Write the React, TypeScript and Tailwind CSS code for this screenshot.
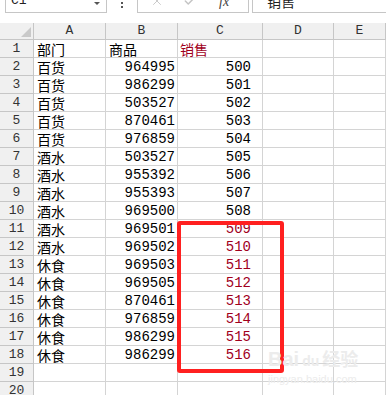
import { X, Check } from "lucide-react";

const rows: [string, string, string][] = [
  ["部门", "商品", "销售"],
  ["百货", "964995", "500"],
  ["百货", "986299", "501"],
  ["百货", "503527", "502"],
  ["百货", "870461", "503"],
  ["百货", "976859", "504"],
  ["酒水", "503527", "505"],
  ["酒水", "955392", "506"],
  ["酒水", "955393", "507"],
  ["酒水", "969500", "508"],
  ["酒水", "969501", "509"],
  ["酒水", "969502", "510"],
  ["休食", "969503", "511"],
  ["休食", "969505", "512"],
  ["休食", "870461", "513"],
  ["休食", "976859", "514"],
  ["休食", "986299", "515"],
  ["休食", "986299", "516"],
  ["", "", ""],
  ["", "", ""],
];

const cjk = "font-['Noto_Sans_CJK_SC',sans-serif]";
const mono = "font-['Liberation_Mono',monospace]";
const cell = "h-[18px] border-r border-b border-[#d4d4d4] bg-white";

export default function App() {
  return (
    <div className="relative h-[395px] w-[386px] overflow-hidden bg-white">
      {/* formula bar, cut off at the top */}
      <div className="-mt-[11px] flex h-[24px] items-stretch">
        <div className="ml-[5px] flex w-[102px] items-center justify-between border border-[#c6c6c6] pr-[6px] pl-[5px]">
          <span className={`${mono} text-[13px] text-[#222]`}>C1</span>
          <span className="mt-[4px] h-0 w-0 border-x-[3px] border-t-[3px] border-x-transparent border-t-[#555]" />
        </div>
        <div className="flex w-[30px] flex-col items-center justify-end gap-[2px] pb-[5px]">
          <span className="h-[2px] w-[2px] bg-[#555]" />
          <span className="h-[2px] w-[2px] bg-[#555]" />
        </div>
        <div className="flex w-[112px] items-center border border-[#c6c6c6] pl-[12px]">
          <X className="h-[14px] w-[14px] text-[#c4c4c4]" strokeWidth={1.5} />
          <Check className="ml-[19px] h-[14px] w-[14px] text-[#c4c4c4]" strokeWidth={2.5} />
          <span className="ml-[22px] font-['Liberation_Serif',serif] text-[14px] text-[#444] italic">
            fx
          </span>
        </div>
        <div className="ml-[3px] flex flex-1 items-center border-y border-l border-[#c6c6c6] pl-[14px]">
          <span className={`${cjk} text-[14px] text-[#222]`}>销售</span>
        </div>
      </div>

      {/* sheet grid */}
      <div className="mt-[10px] grid grid-cols-[34px_72px_72px_85px_71px_1fr]">
        <div className="relative h-[17px] border-r border-b border-[#c6c6c6] bg-[#f0f0f0]">
          <svg className="absolute top-[4px] left-[21px]" width="10" height="10" viewBox="0 0 10 10">
            <polygon points="10,0 10,10 0,10" fill="#c9c9c9" />
          </svg>
        </div>
        {["A", "B", "C", "D", "E"].map((l) => (
          <div
            key={l}
            className={`${mono} flex h-[17px] items-center justify-center border-r border-b border-[#c6c6c6] bg-[#f0f0f0] text-[13px] text-[#333]`}
          >
            {l}
          </div>
        ))}

        {rows.map(([a, b, c], i) => (
          <div key={i} className="contents">
            <div
              className={`${mono} flex h-[18px] items-center justify-center border-r border-b border-[#c6c6c6] bg-[#f0f0f0] text-[13px] text-[#333]`}
            >
              {i + 1}
            </div>
            <div className={`${cell} ${cjk} flex items-center pl-[3px] text-[14px] leading-none text-black`}>{a}</div>
            <div
              className={`${cell} flex items-center pr-[2px] text-[14px] leading-none text-black ${
                i === 0 ? `${cjk} justify-start pl-[3px]` : `${mono} justify-end text-[13px]`
              }`}
            >
              {b}
            </div>
            <div
              className={`${cell} flex items-center text-[14px] leading-none ${
                i === 0
                  ? `${cjk} justify-start pl-[2px] text-[#a0001c]`
                  : `${mono} justify-end pr-[11px] text-[13px] ${i >= 10 ? "text-[#a0001c]" : "text-black"}`
              }`}
            >
              {c}
            </div>
            <div className={cell} />
            <div className={cell} />
          </div>
        ))}
      </div>

      {/* highlight box */}
      <div className="absolute top-[221px] left-[177px] h-[152px] w-[107px] rounded-[3px] border-[4px] border-[#ff2020]" />

      {/* watermark */}
      <div className="pointer-events-none absolute top-[349px] left-[268px] flex flex-col items-start text-[#ececec]">
        <span className="font-['Liberation_Sans',sans-serif] text-[20px] leading-none font-bold">
          Bai<span className="mx-[3px] text-[14px]">du</span>
          <span className={`${cjk} text-[18px]`}>经验</span>
        </span>
        <span className="mt-[5px] font-['Liberation_Sans',sans-serif] text-[11px] leading-none">
          jingyan.baidu.com
        </span>
      </div>
    </div>
  );
}
